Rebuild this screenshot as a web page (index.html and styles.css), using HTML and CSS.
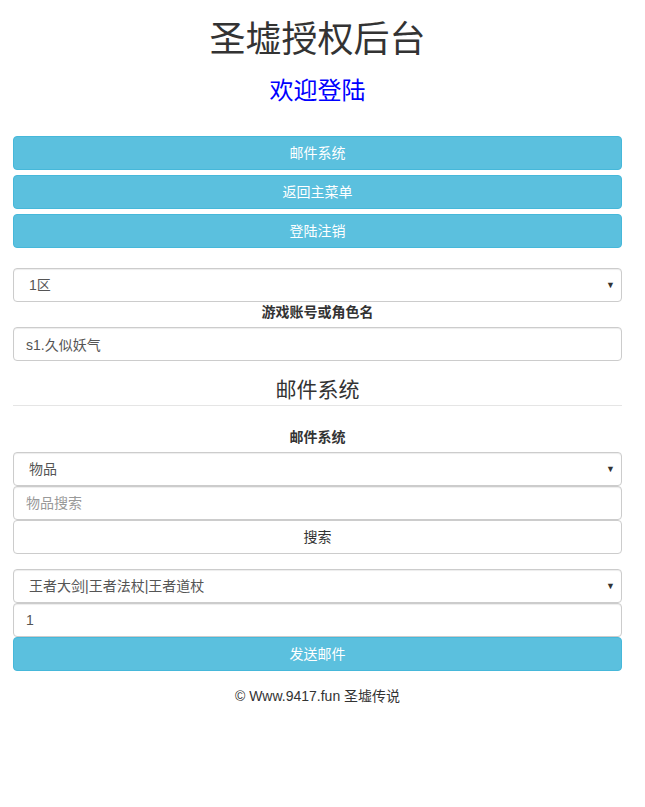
FILE: index.html
```html
<!DOCTYPE html>
<html lang="zh-CN">
<head>
<meta charset="utf-8">
<title>圣墟授权后台</title>
<link rel="stylesheet" href="styles.css">
</head>
<body>
<div class="page">
  <h1 class="title">圣墟授权后台</h1>
  <h3 class="welcome"><a class="welcome-link" href="#">欢迎登陆</a></h3>

  <div class="menu">
    <button class="btn btn-info" type="button">邮件系统</button>
    <button class="btn btn-info" type="button">返回主菜单</button>
    <button class="btn btn-info" type="button">登陆注销</button>
  </div>

  <div class="form-block first">
    <div class="select-wrap">
      <select class="control">
        <option>1区</option>
      </select>
    </div>
    <label class="field-label">游戏账号或角色名</label>
    <input class="control" type="text" value="s1.久似妖气">
  </div>

  <div class="legend">邮件系统</div>
  <label class="field-label">邮件系统</label>

  <div class="stack">
    <div class="select-wrap">
      <select class="control">
        <option>物品</option>
      </select>
    </div>
    <input class="control" type="text" placeholder="物品搜索">
    <button class="btn btn-default" type="button">搜索</button>
  </div>

  <div class="stack second">
    <div class="select-wrap">
      <select class="control">
        <option>王者大剑|王者法杖|王者道杖</option>
      </select>
    </div>
    <input class="control" type="text" value="1">
    <button class="btn btn-info" type="button">发送邮件</button>
  </div>

  <p class="footer">© Www.9417.fun 圣墟传说</p>
</div>
</body>
</html>
```
FILE: styles.css
```css
* {
  box-sizing: border-box;
}

html, body {
  margin: 0;
  padding: 0;
  background: #ffffff;
}

body {
  font-family: "Liberation Sans", "Noto Sans CJK SC", sans-serif;
  font-size: 14px;
  line-height: 20px;
  color: #333333;
}

.page {
  width: 609px;
  margin-left: 13px;
  display: flex;
  flex-direction: column;
}

.title {
  margin: 20px 0 0;
  font-size: 36px;
  line-height: 40px;
  font-weight: 400;
  text-align: center;
  color: #333333;
}

.welcome {
  margin: 18px 0 0;
  font-size: 24px;
  line-height: 26px;
  font-weight: 400;
  text-align: center;
}

.welcome-link {
  color: #0000ff;
  text-decoration: none;
}

.menu {
  margin-top: 32px;
  display: flex;
  flex-direction: column;
  gap: 5px;
}

.btn {
  display: block;
  width: 100%;
  height: 34px;
  padding: 6px 12px;
  font-family: inherit;
  font-size: 14px;
  line-height: 20px;
  text-align: center;
  border: 1px solid transparent;
  border-radius: 4px;
  cursor: pointer;
}

.btn-info {
  background: #5bc0de;
  border-color: #46b8da;
  color: #ffffff;
}

.btn-default {
  background: #ffffff;
  border-color: #cccccc;
  color: #333333;
}

.form-block.first {
  margin-top: 20px;
  display: flex;
  flex-direction: column;
}

.field-label {
  display: block;
  margin-bottom: 5px;
  font-weight: 700;
  text-align: center;
  line-height: 20px;
}

.control {
  display: block;
  width: 100%;
  height: 34px;
  padding: 6px 12px;
  font-family: inherit;
  font-size: 14px;
  line-height: 20px;
  color: #555555;
  background: #ffffff;
  border: 1px solid #cccccc;
  border-radius: 4px;
  box-shadow: inset 0 1px 1px rgba(0, 0, 0, 0.075);
}

.control::placeholder {
  color: #999999;
}

select.control {
  appearance: none;
  -webkit-appearance: none;
  padding-left: 15px;
  padding-right: 24px;
}

.select-wrap {
  position: relative;
}

.select-wrap::after {
  content: "▼";
  position: absolute;
  right: 7px;
  top: 50%;
  transform: translateY(-50%);
  font-size: 9px;
  line-height: 10px;
  color: #333333;
  pointer-events: none;
}

.legend {
  margin-top: 14px;
  margin-bottom: 21px;
  height: 31px;
  font-size: 21px;
  line-height: 30px;
  font-weight: 400;
  text-align: center;
  color: #333333;
  border-bottom: 1px solid #e5e5e5;
}

.stack {
  display: flex;
  flex-direction: column;
}

.stack.second {
  margin-top: 15px;
}

.footer {
  margin: 15px 0 0;
  text-align: center;
  line-height: 20px;
  color: #333333;
}
```
